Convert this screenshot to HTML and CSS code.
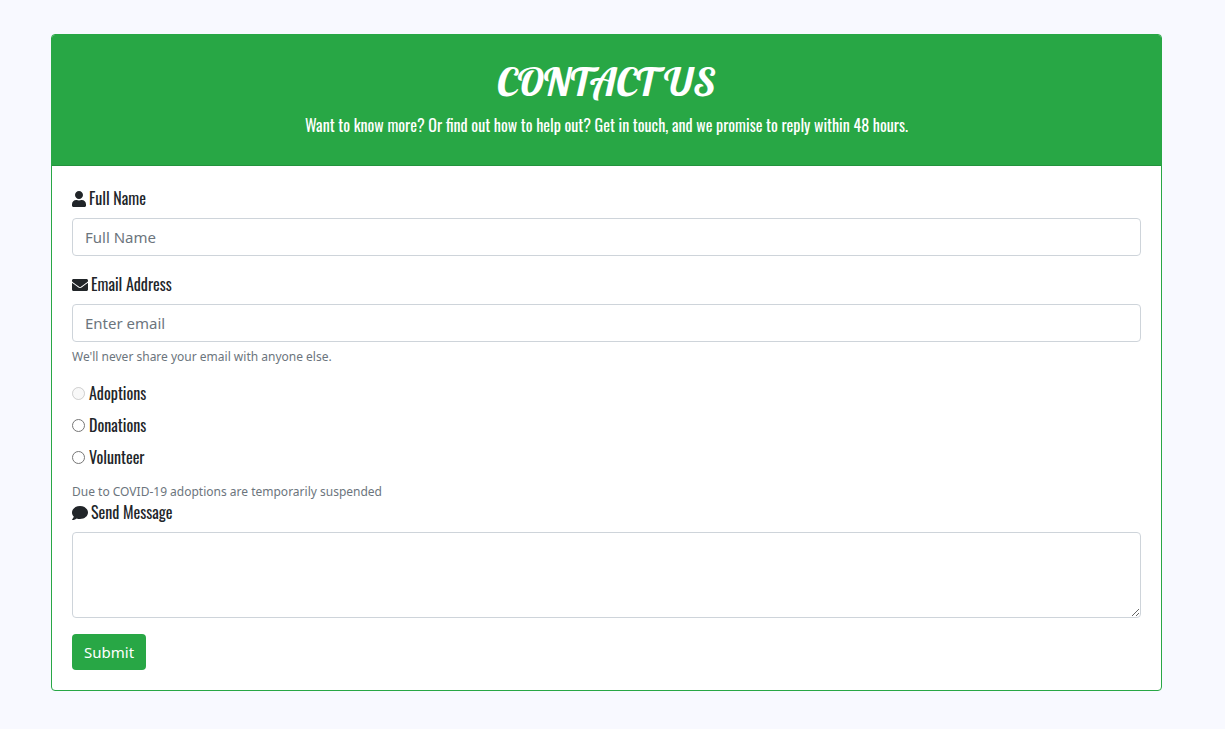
FILE: index.html
```html
<!DOCTYPE html>
<html lang="en">
<head>
<meta charset="utf-8">
<meta name="viewport" content="width=device-width, initial-scale=1">
<title>Contact Us</title>
<link rel="stylesheet" href="styles.css">
</head>
<body>
<main class="page">
  <section class="card">
    <header class="card-header">
      <h1 class="title">CONTACT US</h1>
      <p class="lead">Want to know more? Or find out how to help out? Get in touch, and we promise to reply within 48 hours.</p>
    </header>
    <form class="card-body">
      <div class="group">
        <label class="label" for="name"><svg class="icon icon-user" viewBox="0 0 448 512" aria-hidden="true"><path d="M224 256c70.7 0 128-57.300 128-128S294.700 0 224 0 96 57.300 96 128s57.300 128 128 128zm89.600 32h-16.700c-22.200 10.200-46.900 16-72.900 16s-50.600-5.800-72.900-16h-16.700C60.200 288 0 348.200 0 422.400V464c0 26.500 21.500 48 48 48h352c26.500 0 48-21.500 48-48v-41.600c0-74.200-60.200-134.400-134.400-134.400z"/></svg>Full Name</label>
        <input class="control" id="name" type="text" placeholder="Full Name">
      </div>
      <div class="group">
        <label class="label" for="email"><svg class="icon" viewBox="0 0 512 512" aria-hidden="true"><path d="M502.300 190.800c3.900-3.100 9.700-.2 9.700 4.700V400c0 26.500-21.500 48-48 48H48c-26.500 0-48-21.500-48-48V195.600c0-5 5.700-7.800 9.700-4.700 22.400 17.400 52.100 39.500 154.100 113.600 21.100 15.400 56.700 47.800 92.200 47.600 35.700.3 72-32.800 92.300-47.600 102-74.100 131.600-96.300 154-113.700zM256 320c23.200.4 56.600-29.200 73.400-41.400 132.700-96.300 142.800-104.700 173.400-128.700 5.800-4.500 9.200-11.500 9.200-18.900v-19c0-26.500-21.500-48-48-48H48c-26.500 0-48 21.500-48 48v19c0 7.400 3.400 14.300 9.200 18.900 30.600 23.900 40.700 32.400 173.400 128.700 16.800 12.200 50.200 41.800 73.400 41.400z"/></svg>Email Address</label>
        <input class="control" id="email" type="email" placeholder="Enter email" aria-describedby="email-help">
        <small class="help" id="email-help">We'll never share your email with anyone else.</small>
      </div>
      <div class="choices" role="radiogroup" aria-label="Topic">
        <label class="choice"><input class="radio" type="radio" name="topic" value="adoptions" disabled>Adoptions</label>
        <label class="choice"><input class="radio" type="radio" name="topic" value="donations">Donations</label>
        <label class="choice"><input class="radio" type="radio" name="topic" value="volunteer">Volunteer</label>
        <small class="help">Due to COVID-19 adoptions are temporarily suspended</small>
      </div>
      <div class="group">
        <label class="label" for="message"><svg class="icon" viewBox="0 0 512 512" aria-hidden="true"><path d="M256 32C114.600 32 0 125.100 0 240c0 49.600 21.400 95 57 130.700C44.500 421.100 2.700 466 2.200 466.500c-2.200 2.300-2.800 5.700-1.500 8.700S4.800 480 8 480c66.300 0 116-31.800 140.600-51.400 32.700 12.300 69 19.400 107.400 19.400 141.400 0 256-93.100 256-208S397.400 32 256 32z"/></svg>Send Message</label>
        <textarea class="control message" id="message" rows="3"></textarea>
      </div>
      <button class="submit" type="submit">Submit</button>
    </form>
  </section>
</main>
</body>
</html>
```
FILE: styles.css
```css
* {
  box-sizing: border-box;
}

body {
  margin: 0;
  background: #f8f9ff;
  color: #212529;
  font-family: "Segoe UI", "Noto Sans", sans-serif;
  font-size: 15px;
  line-height: 24px;
}

.page {
  padding: 34px 63px 38px 51px;
}

.card {
  overflow: hidden;
  border: 1px solid #28a745;
  border-radius: 4px;
  background: #fff;
}

.card-header {
  padding: 22px 20px 28px;
  border-bottom: 1px solid #23923d;
  background: #28a745;
  color: #fff;
  text-align: center;
}

.title {
  margin: 0 0 8px;
  font: 500 40px/48px Lobster, "Lobster Two", "Liberation Serif", serif;
}

.lead {
  margin: 0;
  font: 400 16px/24px Oswald, "Liberation Sans Narrow", "Liberation Sans", sans-serif;
}

.card-body {
  padding: 20px;
}

.group {
  margin-bottom: 16px;
}

.label,
.choice {
  display: flex;
  align-items: center;
  margin-bottom: 8px;
  font: 400 16px/24px Oswald, "Liberation Sans Narrow", "Liberation Sans", sans-serif;
}

.label {
  gap: 3px;
}

.choice {
  gap: 4px;
}

.icon {
  width: 16px;
  height: 16px;
  margin-top: 2px;
  fill: currentColor;
}

.icon-user {
  width: 14px;
}

.control {
  display: block;
  width: 100%;
  height: 38px;
  padding: 6px 12px;
  border: 1px solid #ced4da;
  border-radius: 4px;
  background: #fff;
  color: #495057;
  font: inherit;
}

.control::placeholder {
  color: #6c757d;
  opacity: 1;
}

.message {
  height: 86px;
  resize: vertical;
}

.help {
  display: block;
  margin-top: 6px;
  color: #6c757d;
  font-size: 12px;
  line-height: 17px;
}

.radio {
  width: 13px;
  height: 13px;
  margin: 0;
}

.choices .help {
  margin: 14px 0 0;
}

.submit {
  display: block;
  padding: 6px 12px;
  border: 0;
  border-radius: 4px;
  background: #28a745;
  color: #fff;
  font: inherit;
}
```
